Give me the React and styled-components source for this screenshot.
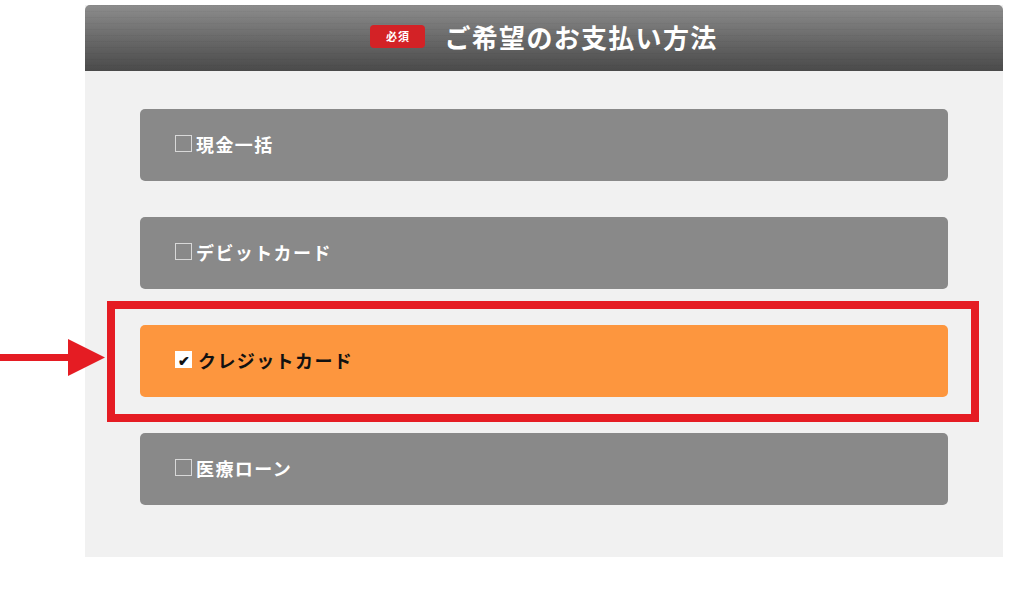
import React from 'react'
import styled, { createGlobalStyle } from 'styled-components'

const GlobalStyle = createGlobalStyle`
  html, body {
    margin: 0;
    padding: 0;
    background: #ffffff;
  }
  body {
    font-family: "Noto Sans CJK JP", "Noto Sans", sans-serif;
  }
`

const Page = styled.div`
  position: relative;
  width: 1024px;
  height: 590px;
  padding-top: 5px;
  box-sizing: border-box;
`

const Panel = styled.section`
  width: 918px;
  margin-left: 85px;
  background: #f1f1f1;
`

const Header = styled.header`
  height: 66px;
  border-radius: 5px 5px 0 0;
  background:
    repeating-linear-gradient(
      to bottom,
      rgba(0, 0, 0, 0.035) 0px,
      rgba(0, 0, 0, 0.035) 1px,
      transparent 1px,
      transparent 6px
    ),
    linear-gradient(to bottom, #8d8d8d 0%, #6a6a6a 50%, #4a4a4a 100%);
  display: flex;
  align-items: center;
  justify-content: center;
  gap: 19px;
  padding-bottom: 4px;
  box-sizing: border-box;
`

const Badge = styled.span`
  display: inline-flex;
  align-items: center;
  justify-content: center;
  width: 55px;
  height: 23px;
  border-radius: 4px;
  background: #d32226;
  color: #ffffff;
  font-size: 11px;
  font-weight: 700;
  letter-spacing: 1px;
`

const Title = styled.h2`
  margin: 0;
  color: #ffffff;
  font-size: 26px;
  font-weight: 700;
  letter-spacing: 1.3px;
`

const List = styled.div`
  display: flex;
  flex-direction: column;
  gap: 36px;
  padding: 38px 55px 52px;
`

const Option = styled.label`
  position: relative;
  display: flex;
  align-items: center;
  height: 72px;
  padding-left: 35px;
  padding-bottom: 3px;
  border-radius: 5px;
  background: ${p => (p.$checked ? '#fd963e' : '#898989')};
  color: ${p => (p.$checked ? '#111111' : '#ffffff')};
  font-size: 18px;
  font-weight: 700;
  letter-spacing: 1.4px;
  box-sizing: border-box;
`

const Box = styled.span`
  display: inline-flex;
  align-items: center;
  justify-content: center;
  width: 17px;
  height: 17px;
  margin-right: ${p => (p.$checked ? '6px' : '4px')};
  box-sizing: border-box;
  border: ${p => (p.$checked ? 'none' : '1px solid #d8d8d8')};
  background: ${p => (p.$checked ? '#ffffff' : 'transparent')};
  color: #111111;
  font-size: 14px;
  line-height: 1;
  letter-spacing: 0;
`

const Highlight = styled.div`
  position: absolute;
  left: -33px;
  top: -24px;
  width: 872px;
  height: 121px;
  border: 8px solid #e51c23;
  box-sizing: border-box;
  pointer-events: none;
`

const Arrow = styled.svg`
  position: absolute;
  left: 0;
  top: 338px;
`

const options = [
  { label: '現金一括' },
  { label: 'デビットカード' },
  { label: 'クレジットカード', checked: true },
  { label: '医療ローン' },
]

export default function App() {
  return (
    <Page>
      <GlobalStyle />
      <Panel>
        <Header>
          <Badge>必須</Badge>
          <Title>ご希望のお支払い方法</Title>
        </Header>
        <List>
          {options.map(opt => (
            <Option key={opt.label} $checked={opt.checked}>
              <Box $checked={opt.checked}>{opt.checked ? '✔' : ''}</Box>
              {opt.label}
              {opt.checked && <Highlight />}
            </Option>
          ))}
        </List>
      </Panel>
      <Arrow width="106" height="40" viewBox="0 0 106 40">
        <rect x="0" y="16" width="72" height="7" fill="#e51c23" />
        <polygon points="68,1 105,19.5 68,38" fill="#e51c23" />
      </Arrow>
    </Page>
  )
}
